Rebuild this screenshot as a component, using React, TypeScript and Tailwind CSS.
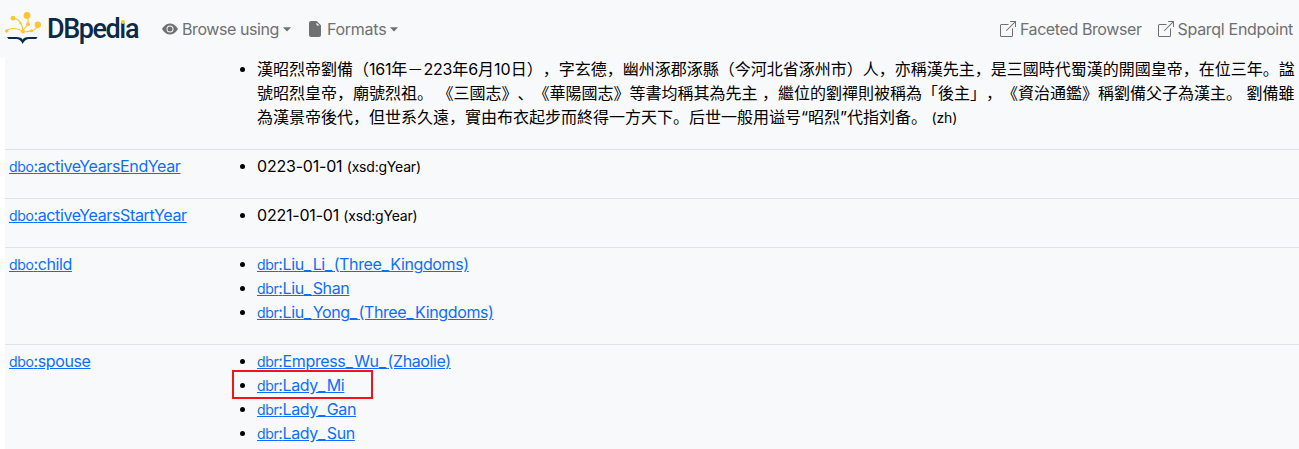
import { Fragment, type ReactNode } from "react";

const TEXT = "font-['Inter','Noto_Sans_CJK_SC',sans-serif]";

function Caret() {
  return (
    <svg width="8" height="5" viewBox="0 0 8 5" fill="currentColor" className="ml-1 shrink-0">
      <path d="M0 0.3h8L4 4.5z" />
    </svg>
  );
}

function Eye() {
  return (
    <svg width="16" height="16" viewBox="0 0 16 16" fill="currentColor" className="shrink-0">
      <path d="M10.500 8a2.500 2.500 0 1 1-5 0 2.500 2.500 0 0 1 5 0z" />
      <path d="M0 8s3-5.500 8-5.500S16 8 16 8s-3 5.500-8 5.500S0 8 0 8zm8 3.500a3.500 3.500 0 1 0 0-7 3.500 3.500 0 0 0 0 7z" />
    </svg>
  );
}

function FileIcon() {
  return (
    <svg width="16" height="16" viewBox="0 0 16 16" fill="currentColor" className="shrink-0">
      <path d="M4 0h5.293A1 1 0 0 1 10 .293L13.707 4a1 1 0 0 1 .293.707V14a2 2 0 0 1-2 2H4a2 2 0 0 1-2-2V2a2 2 0 0 1 2-2zm5.500 1.500v2a1 1 0 0 0 1 1h2l-3-3z" />
    </svg>
  );
}

function External() {
  return (
    <svg width="16" height="16" viewBox="0 0 16 16" fill="currentColor" className="shrink-0">
      <path d="M8.636 3.500a.5.5 0 0 0-.5-.5H1.500A1.500 1.500 0 0 0 0 4.500v10A1.500 1.500 0 0 0 1.500 16h10a1.500 1.500 0 0 0 1.500-1.500V7.864a.5.5 0 0 0-1 0V14.500a.5.5 0 0 1-.5.5h-10a.5.5 0 0 1-.5-.5v-10a.5.5 0 0 1 .5-.5h6.636a.5.5 0 0 0 .5-.5z" />
      <path d="M16 .5a.5.5 0 0 0-.5-.5h-5a.5.5 0 0 0 0 1h3.793L6.146 9.146a.5.5 0 1 0 .708.708L15 1.707V5.500a.5.5 0 0 0 1 0v-5z" />
    </svg>
  );
}

function Logo() {
  return (
    <a className="flex w-[133px] shrink-0 items-center">
      <svg width="37" height="34" viewBox="0 0 37 34" className="shrink-0">
        <g fill="none" stroke="#fdc52e" strokeWidth="1.100">
          <path d="M1.500 19C4 15.500 12 15.500 18 19.500" />
          <path d="M8 6.500c5 0 6 2 7.500 4.500s2.500 4 2.500 8" />
          <path d="M22 4c1.500 4 1.500 6 1 8-1 3-4 3-5 7" />
          <path d="M18 19.500c4 1 6-.5 9-1s5-2 5.500-6" />
        </g>
        <g fill="#fdc52e">
          <circle cx="22" cy="3.500" r="3.400" />
          <circle cx="8" cy="6.200" r="2.400" />
          <circle cx="32.800" cy="12.700" r="3.200" />
          <circle cx="23" cy="12.200" r="1.900" />
          <circle cx="15.500" cy="11" r="1.200" />
          <circle cx="1.700" cy="19" r="1.700" />
          <circle cx="18" cy="19.500" r="2" />
          <circle cx="26.500" cy="18.800" r="1.500" />
        </g>
        <path d="M2 25h9c4 0 6 1 6.700 2.800C18.500 26 20 25 24 25h8.500l-1.300 2H25c-4 0-5.500 1.500-7.300 5-1.700-3.500-3.200-5-7.200-5H3.500z" fill="#0a2a48" />
      </svg>
      <span className="ml-[5px] font-['Roboto',sans-serif] text-[27px] leading-8 font-medium tracking-[-1.450px] text-[#0a2a48]">
        DBped<span className="relative">ı<i className="absolute top-[7px] left-[1.500px] size-[4px] rounded-full bg-[#fdc52e]" /></span>a
      </span>
    </a>
  );
}

function Link({ prefix, name }: { prefix: string; name: string }) {
  return (
    <a className="tracking-[-0.370px] text-[#0d6efd] underline">
      <span className="text-[14px]">{prefix}</span>:
      {name.split("_").map((part, i) => (
        <Fragment key={i}>
          {i > 0 && <span className="tracking-[1.500px]">_</span>}
          {part}
        </Fragment>
      ))}
    </a>
  );
}

function Row({ label, children }: { label: ReactNode; children: ReactNode }) {
  return (
    <div className="flex border-t border-[#dee2e6] pt-1 pb-5 pl-1">
      <div className="h-6 w-[216px] shrink-0 leading-6">{label}</div>
      <ul className="flex flex-col pl-[7px]">{children}</ul>
    </div>
  );
}

function Item({ children, marked = false }: { children: ReactNode; marked?: boolean }) {
  return (
    <li className="relative flex h-6 leading-6 whitespace-nowrap">
      <span className="mt-[10px] mr-3 ml-2 size-[5px] shrink-0 rounded-full bg-black" />
      <span>{children}</span>
      {marked && <span className="absolute -top-[3px] left-0 h-[29px] w-[141px] border-2 border-[#f3141b]" />}
    </li>
  );
}

function Typed({ value }: { value: string }) {
  return (
    <Item>
      <span className="tracking-[-0.2px]">{value} </span>
      <span className="text-[14px] tracking-[-0.2px]">(xsd:gYear)</span>
    </Item>
  );
}

export default function App() {
  return (
    <div className={`h-[449px] overflow-hidden bg-white text-[16px] text-black ${TEXT}`}>
      <nav className="flex h-[58px] items-center bg-[#f8f9fb] pr-[6px] pl-[5px] text-[#6f7072]">
        <Logo />
        <div className="ml-6 flex items-center">
          <Eye /><span className="ml-1 tracking-[-0.420px]">Browse using</span><Caret />
        </div>
        <div className="ml-4 flex items-center">
          <FileIcon /><span className="ml-1 tracking-[-0.250px]">Formats</span><Caret />
        </div>
        <div className="ml-auto flex items-center">
          <External /><span className="ml-1 tracking-[-0.4px]">Faceted Browser</span>
        </div>
        <div className="ml-4 flex items-center">
          <External /><span className="ml-1 tracking-[-0.3px]">Sparql Endpoint</span>
        </div>
      </nav>
      <main className="ml-[5px] h-[391px] overflow-hidden bg-[#f8f9fb]">
        <div className="flex h-[91px] pl-[235px]">
          <span className="mt-[9px] mr-3 size-[5px] shrink-0 rounded-full bg-black" />
          <div lang="zh" className="-mt-px leading-6 whitespace-nowrap [text-spacing-trim:space-all]">
            <div>漢昭烈帝劉備（<span className="tracking-[-0.2px]">161</span>年－<span className="tracking-[-0.2px]">223</span>年6月10日），字玄德，幽州涿郡涿縣（今河北省涿州市）人，亦稱漢先主，是三國時代蜀漢的開國皇帝，在位三年。諡</div>
            <div>號昭烈皇帝，廟號烈祖。 《三國志》、《華陽國志》等書均稱其為先主 ，繼位的劉禪則被稱為「後主」，《資治通鑑》稱劉備父子為漢主。 劉備雖</div>
            <div>為漢景帝後代，但世系久遠，實由布衣起步而終得一方天下。后世一般用谥号“昭烈”代指刘备。 <span className="text-[14px] tracking-[-0.2px]">(zh)</span></div>
          </div>
        </div>
        <Row label={<Link prefix="dbo" name="activeYearsEndYear" />}>
          <Typed value="0223-01-01" />
        </Row>
        <Row label={<Link prefix="dbo" name="activeYearsStartYear" />}>
          <Typed value="0221-01-01" />
        </Row>
        <Row label={<Link prefix="dbo" name="child" />}>
          <Item><Link prefix="dbr" name="Liu_Li_(Three_Kingdoms)" /></Item>
          <Item><Link prefix="dbr" name="Liu_Shan" /></Item>
          <Item><Link prefix="dbr" name="Liu_Yong_(Three_Kingdoms)" /></Item>
        </Row>
        <Row label={<Link prefix="dbo" name="spouse" />}>
          <Item><Link prefix="dbr" name="Empress_Wu_(Zhaolie)" /></Item>
          <Item marked><Link prefix="dbr" name="Lady_Mi" /></Item>
          <Item><Link prefix="dbr" name="Lady_Gan" /></Item>
          <Item><Link prefix="dbr" name="Lady_Sun" /></Item>
        </Row>
      </main>
    </div>
  );
}
